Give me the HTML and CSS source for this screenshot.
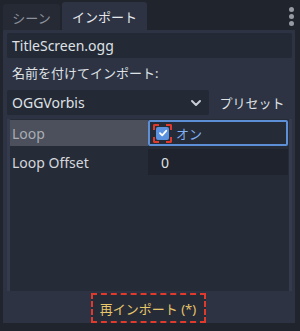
FILE: index.html
```html
<!DOCTYPE html>
<html lang="ja">
<head>
<meta charset="utf-8">
<link rel="stylesheet" href="styles.css">
</head>
<body>
<div class="dock">
  <div class="tabbar">
    <div class="tab">シーン</div>
    <div class="tab active">インポート</div>
    <div class="spacer"></div>
    <div class="menu"><span></span><span></span><span></span></div>
  </div>
  <div class="panel">
    <div class="field file">TitleScreen.ogg</div>
    <div class="label jp">名前を付けてインポート:</div>
    <div class="importer-row">
      <div class="field select">OGGVorbis
        <svg class="chev" width="12" height="8" viewBox="0 0 12 8"><path d="M2 2 L6 6 L10 2" fill="none" stroke="#c8ccd4" stroke-width="2" stroke-linecap="round" stroke-linejoin="round"/></svg>
      </div>
      <div class="preset jp">プリセット</div>
    </div>
    <div class="inspector">
      <div class="prop">
        <div class="name hl">Loop</div>
        <div class="value check">
          <span class="cb-wrap"><span class="cb"><svg width="10" height="10" viewBox="0 0 10 10"><path d="M2 5.2 L4.2 7.4 L8.2 2.8" fill="none" stroke="#fff" stroke-width="1.8" stroke-linecap="round" stroke-linejoin="round"/></svg></span></span>
          <span class="on jp">オン</span>
        </div>
      </div>
      <div class="prop">
        <div class="name">Loop Offset</div>
        <div class="value num">0</div>
      </div>
    </div>
    <div class="footer">
      <div class="reimport jp">再インポート (*)</div>
    </div>
  </div>
</div>
</body>
</html>
```

FILE: styles.css
```css
* { box-sizing: border-box; }
html, body { margin: 0; padding: 0; }
body {
  width: 300px;
  height: 331px;
  background: #20242d;
  font-family: "Noto Sans", "Noto Sans CJK JP", sans-serif;
  font-size: 14px;
  color: #dfe1e5;
  overflow: hidden;
}
.jp { font-size: 13px; }
.dock { display: flex; flex-direction: column; height: 323px; padding: 0 5px 0 3px; }
.tabbar { display: flex; align-items: flex-end; height: 30px; }
.tab {
  height: 26px;
  padding: 0 8px;
  display: flex; align-items: center; justify-content: center;
  white-space: nowrap;
  flex-shrink: 0;
  font-size: 13px;
  color: #8c919b;
  background: #262a35;
  border-radius: 3px 3px 0 0;
  margin-right: 2px;
  width: 57px;
}
.tab.active {
  height: 28px;
  width: 85px;
  background: #2d3343;
  color: #e6e8ec;
}
.spacer { flex: 1; }
.menu {
  align-self: flex-start;
  margin-top: 7px;
  margin-right: 1px;
  display: flex; flex-direction: column; gap: 2px;
}
.menu span { width: 5px; height: 5px; border-radius: 50%; background: #969aa3; }
.panel {
  flex: 1;
  background: #2d3343;
  padding: 3px 2px 0 4px;
  display: flex; flex-direction: column;
}
.field {
  background: #242936;
  border-radius: 2px;
  height: 25px;
  padding: 0 5px;
  display: flex; align-items: center;
  white-space: nowrap;
}
.file { margin-right: 1px; }
.label { height: 25px; padding: 6px 5px 0; line-height: 18px; margin-bottom: 7px; white-space: nowrap; }
.importer-row { display: flex; align-items: center; gap: 6px; height: 25px; }
.select { width: 202px; flex-shrink: 0; justify-content: space-between; }
.chev { margin-right: 2px; }
.preset { flex: 1; text-align: center; white-space: nowrap; color: #dfe1e5; padding-right: 4px; }
.inspector {
  margin-top: 4px;
  height: 172px;
  background: #262b38;
  border-left: 3px solid #353b4c;
  border-right: 3px solid #353b4c;
  padding: 1px 1px 0 0;
  display: flex; flex-direction: column; gap: 3px;
  margin-right: 1px;
}
.prop { display: flex; height: 26px; }
.name { width: 138px; padding-left: 2px; display: flex; align-items: center; color: #d4d7dc; }
.name.hl { background: #4b505c; color: #a9adb5; }
.value { flex: 1; display: flex; align-items: center; }
.check { border: 2px solid #5c8fd6; border-radius: 2px; padding-left: 3px; }
.cb-wrap { border: 2px dashed #e03a2c; padding: 1px; border-radius: 2px; display: inline-flex; }
.cb { width: 13px; height: 13px; border-radius: 2px; background: #5b92e0; display: inline-flex; align-items: center; justify-content: center; }
.on { color: #7fb0f2; margin-left: 4px; }
.num { background: #1f232d; padding-left: 13px; }
.footer { flex: 1; display: flex; justify-content: center; align-items: flex-end; }
.reimport {
  margin-left: -4px;
  width: 115px; height: 30px;
  border: 2px dashed #e03a2c;
  background: #262b38;
  color: #e8c76a;
  white-space: nowrap;
  display: flex; align-items: center; justify-content: center;
}
```
